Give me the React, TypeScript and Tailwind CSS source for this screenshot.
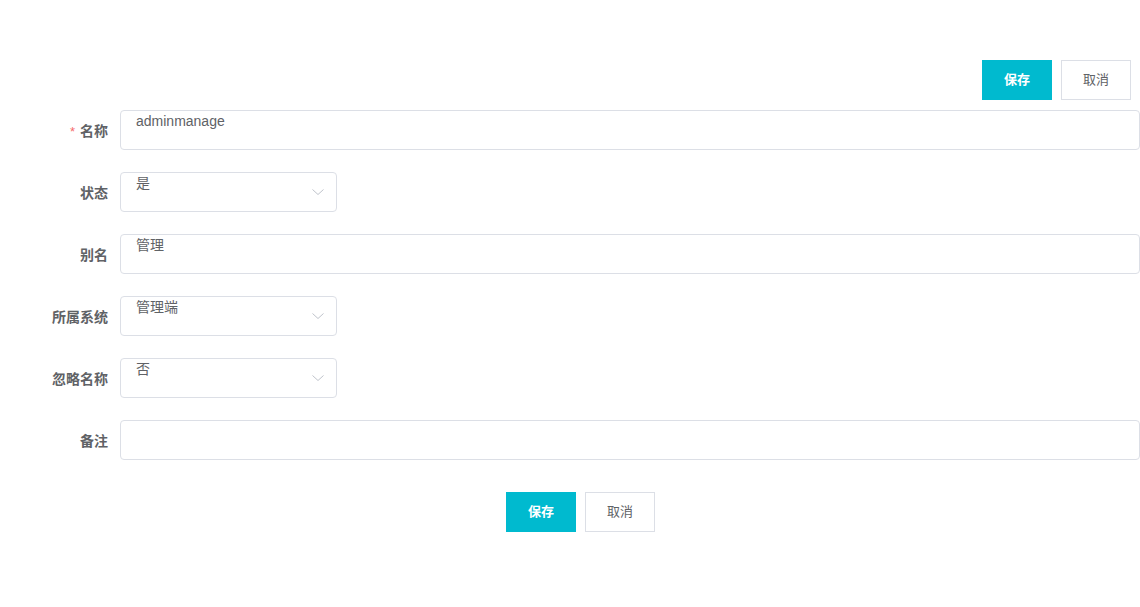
import React from "react";

const font = { fontFamily: '"Liberation Sans", "Noto Sans CJK SC", sans-serif' };

function Chevron() {
  return (
    <svg width="14" height="14" viewBox="0 0 14 14" className="absolute right-[11px] top-1/2 -translate-y-1/2">
      <path d="M1.5 4.5 L7 9.5 L12.5 4.5" fill="none" stroke="#c0c4cc" strokeWidth="1" />
    </svg>
  );
}

function Row({ label, required, children }: { label: string; required?: boolean; children: React.ReactNode }) {
  return (
    <div className="flex items-center mb-[22px]">
      <div className="w-[108px] shrink-0 pt-[3px] text-right text-[14px] font-bold text-[#606266]">
        {required && <span className="text-[#f56c6c] mr-[5px] font-normal text-[13px]">*</span>}
        {label}
      </div>
      <div className="ml-[12px] flex-1">{children}</div>
    </div>
  );
}

function Input({ value }: { value: string }) {
  return (
    <div className="h-[40px] w-full border border-[#dcdfe6] rounded-[4px] bg-white pl-[15px] text-[14px] leading-[20px] text-[#606266]">
      {value}
    </div>
  );
}

function Select({ value }: { value: string }) {
  return (
    <div className="relative h-[40px] w-[217px] border border-[#dcdfe6] rounded-[4px] bg-white pl-[15px] text-[14px] leading-[20px] text-[#606266]">
      {value}
      <Chevron />
    </div>
  );
}

function Buttons() {
  return (
    <div className="flex gap-[9px]">
      <button className="w-[70px] h-[40px] bg-[#00bacf] text-white text-[13px] font-bold">保存</button>
      <button className="w-[70px] h-[40px] bg-white border border-[#dcdfe6] text-[#606266] text-[13px]">取消</button>
    </div>
  );
}

export default function App() {
  return (
    <div className="w-[1140px] h-[607px] bg-white" style={font}>
      <div className="pt-[60px] pr-[9px] flex justify-end mb-[10px]">
        <Buttons />
      </div>
      <div>
        <Row label="名称" required>
          <Input value="adminmanage" />
        </Row>
        <Row label="状态">
          <Select value="是" />
        </Row>
        <Row label="别名">
          <Input value="管理" />
        </Row>
        <Row label="所属系统">
          <Select value="管理端" />
        </Row>
        <Row label="忽略名称">
          <Select value="否" />
        </Row>
        <Row label="备注">
          <Input value="" />
        </Row>
      </div>
      <div className="flex pl-[506px] mt-[32px]">
        <Buttons />
      </div>
    </div>
  );
}
